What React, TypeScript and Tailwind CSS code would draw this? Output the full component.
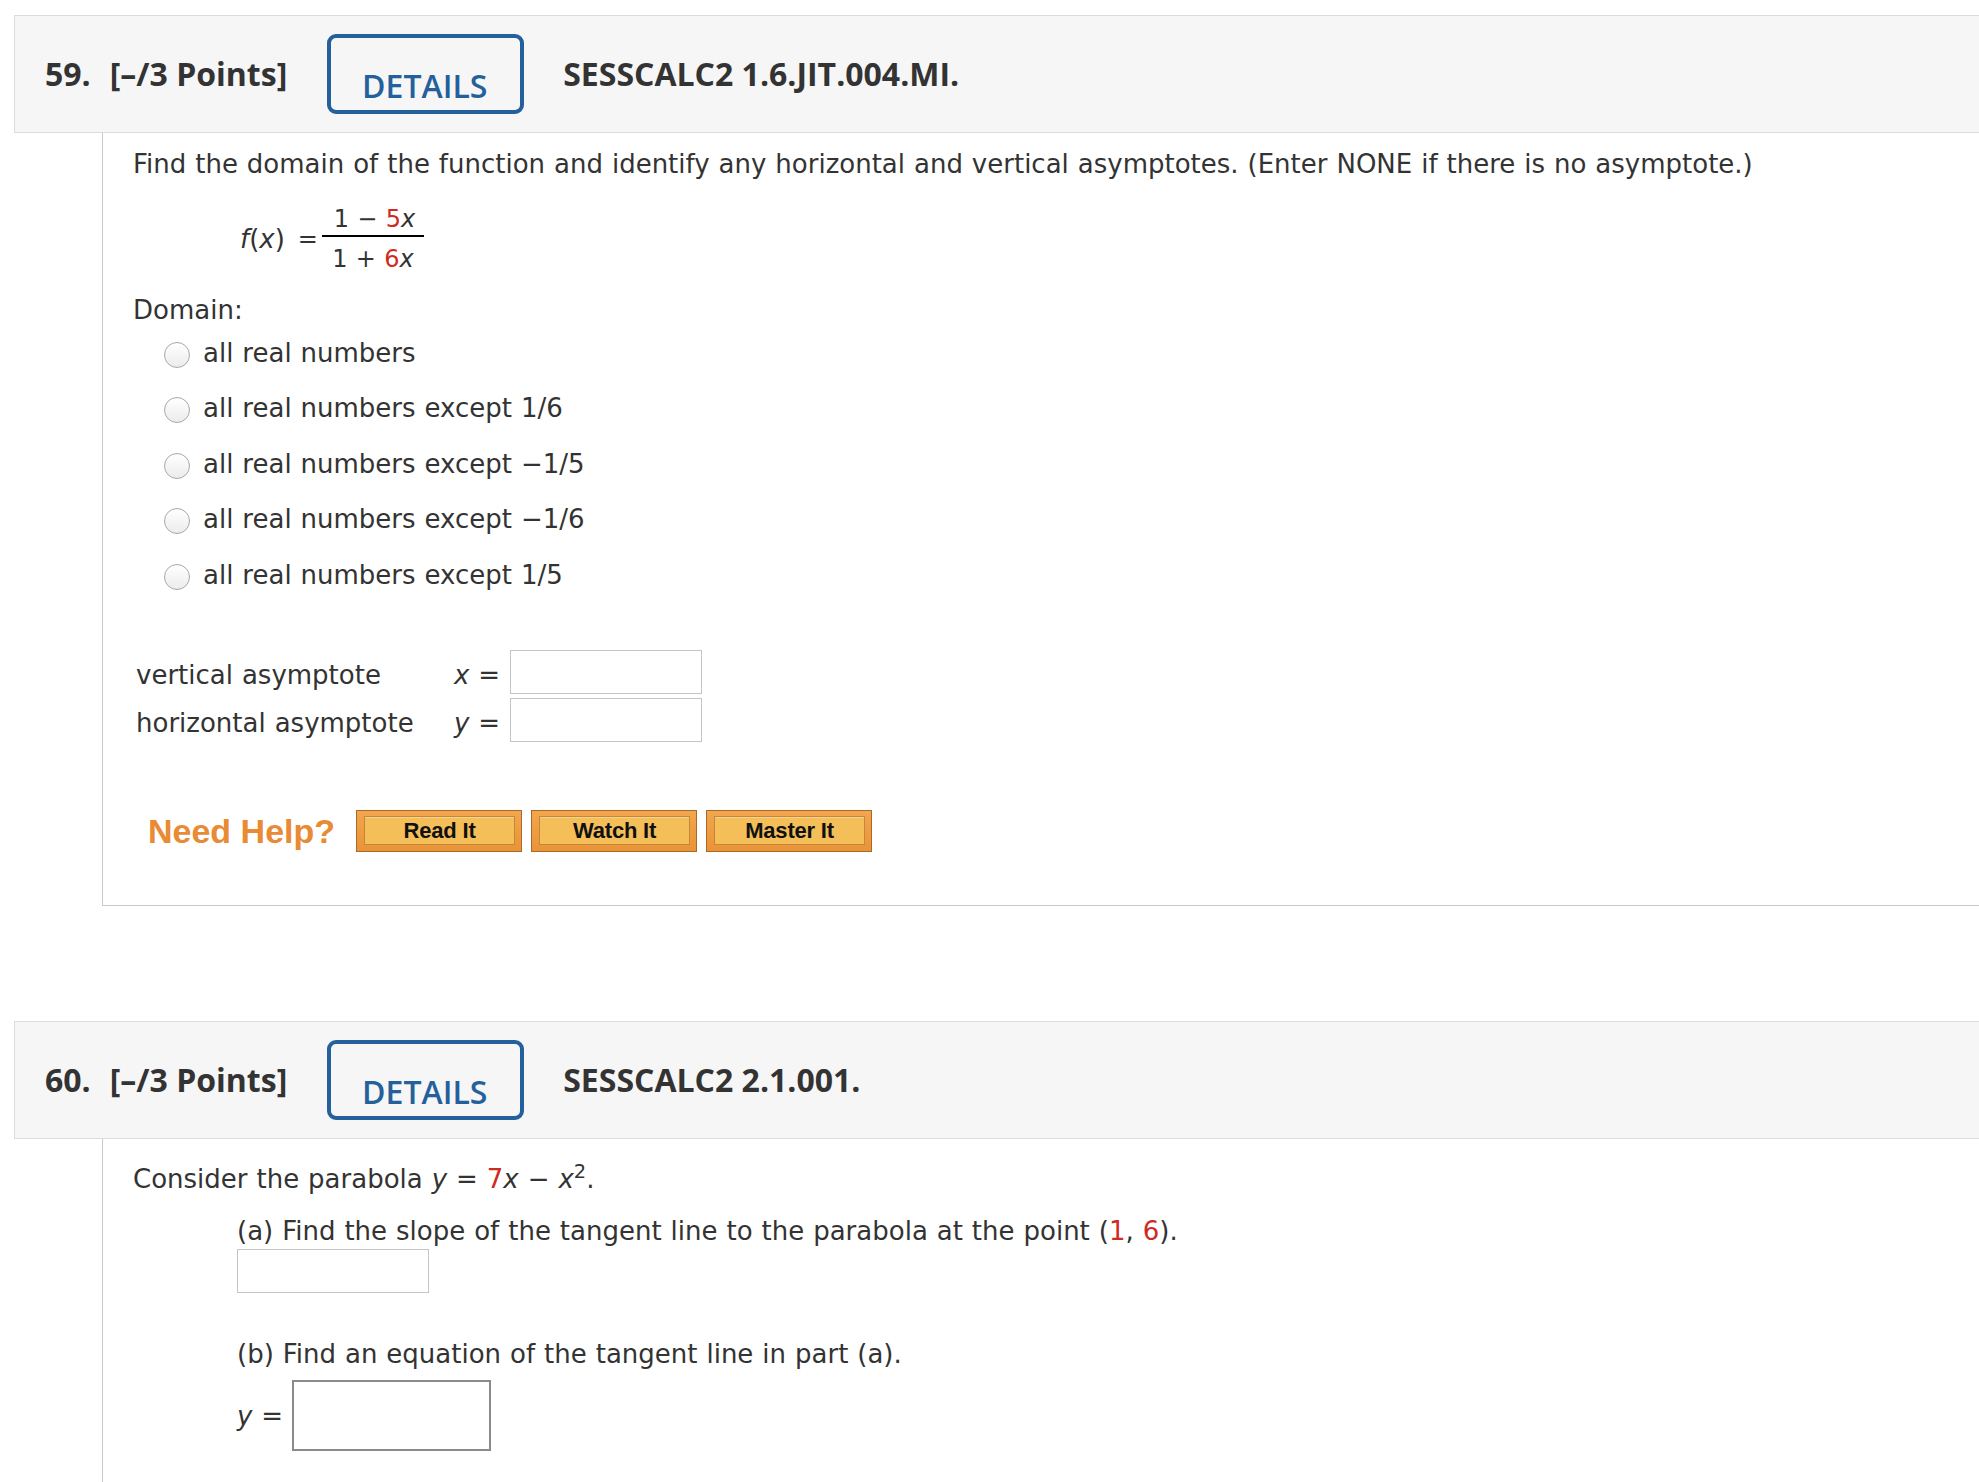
import React from "react";

const RED = "text-[#cf2a1f]";

function Header({ num, code }: { num: string; code: string }) {
  return (
    <div className="ml-[14px] h-[118px] border-y border-l border-[#dcdcdc] bg-[#f6f6f6] flex items-center pl-[30px] font-['Open_Sans',sans-serif] text-[#333] text-[32px] font-bold whitespace-nowrap">
      <span>{num}.</span>
      <span className="ml-[19px]">[–/3 Points]</span>
      <div className="ml-[40px] w-[197px] h-[80px] border-4 border-[#24609b] rounded-[9px] flex items-center justify-center pt-[24px] pr-[2px] text-[#24609b] font-semibold leading-none">
        DETAILS
      </div>
      <span className="ml-[39px]">{code}</span>
    </div>
  );
}

function Radio({ label }: { label: string }) {
  return (
    <div className="h-[55.5px] flex items-center pl-[31px]">
      <span className="mt-[4px] w-[26px] h-[26px] rounded-full border border-[#a8a8a8] bg-gradient-to-b from-white to-[#ececec] shrink-0" />
      <span className="ml-[13px] leading-[32px]">{label}</span>
    </div>
  );
}

function HelpButton({ label }: { label: string }) {
  return (
    <div className="w-[166px] h-[42px] border border-[#a86a2c] bg-gradient-to-b from-[#f3a64c] to-[#ea9337] pt-[5px] pr-[6px] pb-[6px] pl-[7px]">
      <div className="h-full border border-[#c4853c] bg-[#f4be58] shadow-[inset_0_1px_0_#f8d48a] flex items-center justify-center font-['Liberation_Sans',Arial,sans-serif] font-bold text-[22px] tracking-[-0.2px] text-[#111] leading-none">
        {label}
      </div>
    </div>
  );
}

export default function App() {
  return (
    <div className="h-[1482px] overflow-hidden bg-white pt-[15px]">
      <Header num="59" code="SESSCALC2 1.6.JIT.004.MI." />
      <div className="ml-[102px] h-[773px] border-l border-b border-[#c9c9c9] pl-[30px] pt-[15px] font-['DejaVu_Sans',Verdana,sans-serif] text-[26px] leading-[32px] [word-spacing:0.7px] text-[#333] whitespace-nowrap">
        <p>
          Find the domain of the function and identify any horizontal and vertical asymptotes. (Enter NONE if there is no asymptote.)
        </p>
        <div className="mt-[24px] flex items-center text-[24px] leading-[30px] pl-[107px]">
          <span className="text-[26px]">
            <i>f</i>(<i>x</i>)
          </span>
          <span className="ml-[13px]">=</span>
          <div className="ml-[4px] flex flex-col items-center w-[102px]">
            <div className="h-[30px] pl-[3px]">
              1 − <span className={RED}>5</span>
              <i>x</i>
            </div>
            <div className="mt-[1px] h-[2px] w-full bg-black" />
            <div className="mt-[7px] h-[30px]">
              1 + <span className={RED}>6</span>
              <i>x</i>
            </div>
          </div>
        </div>
        <p className="mt-[21px] leading-[30px]">Domain:</p>
        <div>
          <Radio label="all real numbers" />
          <Radio label="all real numbers except 1/6" />
          <Radio label="all real numbers except −1/5" />
          <Radio label="all real numbers except −1/6" />
          <Radio label="all real numbers except 1/5" />
        </div>
        <div className="mt-[45.5px]">
          <div className="h-[48px] flex items-center pl-[3px]">
            <span className="w-[318px] mt-[6px]">vertical asymptote</span>
            <span className="mt-[6px]">
              <i>x</i> =
            </span>
            <div className="ml-[10px] w-[192px] h-[44px] border border-[#c4c4c4] bg-white" />
          </div>
          <div className="h-[48px] flex items-center pl-[3px]">
            <span className="w-[318px] mt-[6px]">horizontal asymptote</span>
            <span className="mt-[6px]">
              <i>y</i> =
            </span>
            <div className="ml-[10px] w-[192px] h-[44px] border border-[#c4c4c4] bg-white" />
          </div>
        </div>
        <div className="mt-[66px] h-[42px] flex items-center">
          <span className="ml-[15px] font-['Liberation_Sans',Arial,sans-serif] font-bold text-[34px] leading-none [word-spacing:0px] text-[#e98a34]">
            Need Help?
          </span>
          <div className="ml-[21px] flex gap-[9px] [word-spacing:0px]">
            <HelpButton label="Read It" />
            <HelpButton label="Watch It" />
            <HelpButton label="Master It" />
          </div>
        </div>
      </div>

      <div className="mt-[115px]">
        <Header num="60" code="SESSCALC2 2.1.001." />
      </div>
      <div className="ml-[102px] h-[400px] border-l border-[#c9c9c9] pl-[30px] pt-[24px] font-['DejaVu_Sans',Verdana,sans-serif] text-[26px] leading-[32px] [word-spacing:0.7px] text-[#333] whitespace-nowrap">
        <p>
          Consider the parabola <i>y</i> = <span className={RED}>7</span>
          <i>x</i> − <i>x</i>
          <sup>2</sup>.
        </p>
        <p className="mt-[20px] pl-[104px]">
          (a) Find the slope of the tangent line to the parabola at the point (<span className={RED}>1</span>,{" "}
          <span className={RED}>6</span>).
        </p>
        <div className="mt-[2px] ml-[104px] w-[192px] h-[44px] border border-[#c4c4c4] bg-white" />
        <p className="mt-[45px] pl-[104px]">(b) Find an equation of the tangent line in part (a).</p>
        <div className="mt-[10px] pl-[104px] flex items-center">
          <span>
            <i>y</i> =
          </span>
          <div className="ml-[9px] w-[199px] h-[71px] border-2 border-[#8a8a8a] bg-white" />
        </div>
      </div>
    </div>
  );
}
